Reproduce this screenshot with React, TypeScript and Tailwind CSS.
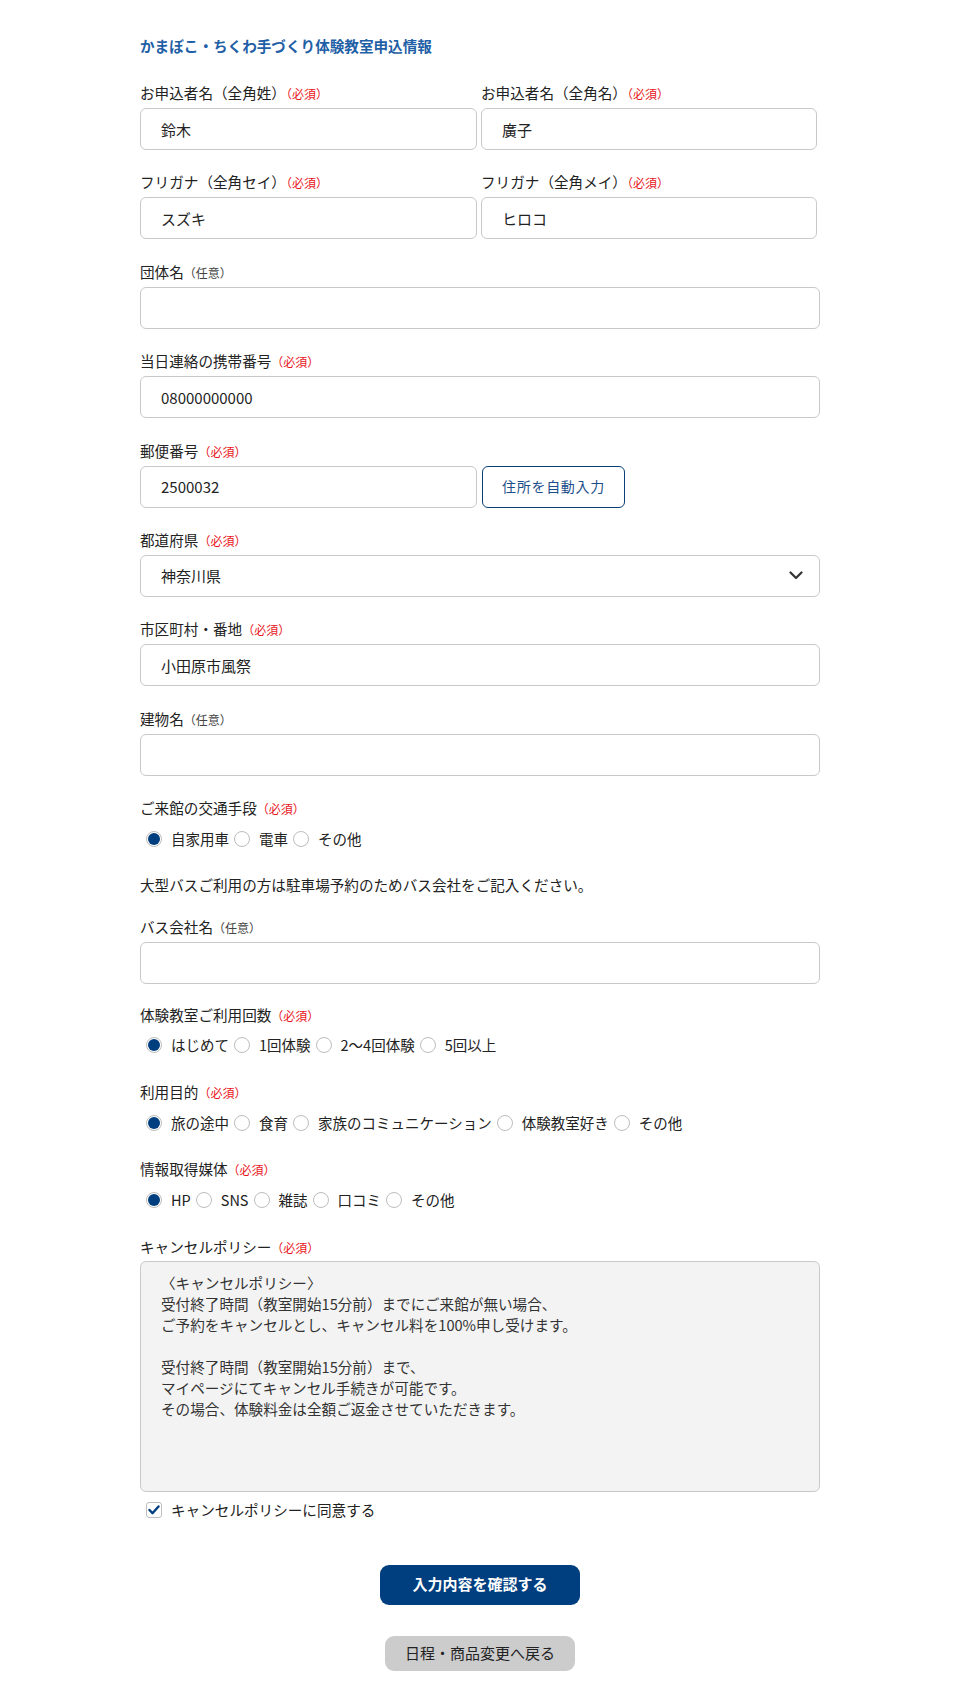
import React from "react";

const Required = () => <span className="text-[12px] leading-none text-[#e8161c]">（必須）</span>;
const Optional = () => <span className="text-[12px] leading-none text-[#444444]">（任意）</span>;

const Label = (props: { text: string; required?: boolean }) => {
  return (
    <div className="text-[14.6px] leading-[22px] text-[#222222]">
      {props.text}
      {props.required ? <Required /> : <Optional />}
    </div>
  );
};

const TextBox = (props: { value?: string }) => {
  return (
    <input
      readOnly
      defaultValue={props.value ?? ""}
      className="mt-[4px] block h-[42px] w-full rounded-[6px] border border-[#c9c9c9] bg-white px-[20px] text-[15px] text-[#222222] outline-none"
    />
  );
};

const Field = (props: { label: string; required?: boolean; value?: string; className?: string }) => {
  return (
    <div className={props.className ?? "mb-[21.4px]"}>
      <Label text={props.label} required={props.required} />
      <TextBox value={props.value} />
    </div>
  );
};

const RadioDot = (props: { checked?: boolean }) => {
  return (
    <span className="flex h-[16px] w-[16px] shrink-0 items-center justify-center rounded-full border border-[#bdbdbd] bg-white">
      {props.checked && <span className="h-[12px] w-[12px] rounded-full bg-[#003f7f]" />}
    </span>
  );
};

const RadioGroup = (props: { label: string; options: string[] }) => {
  return (
    <div className="mb-[21.8px]">
      <Label text={props.label} required />
      <div className="mt-[5.5px] flex h-[28px] items-center text-[14.5px] text-[#222222]">
        {props.options.map((option, i) => (
          <label key={option} className={i === 0 ? "ml-[6px] flex items-center" : "ml-[5px] flex items-center"}>
            <RadioDot checked={i === 0} />
            <span className="ml-[9px]">{option}</span>
          </label>
        ))}
      </div>
    </div>
  );
};

const policyText = `〈キャンセルポリシー〉
受付終了時間（教室開始15分前）までにご来館が無い場合、
ご予約をキャンセルとし、キャンセル料を100%申し受けます。

受付終了時間（教室開始15分前）まで、
マイページにてキャンセル手続きが可能です。
その場合、体験料金は全額ご返金させていただきます。`;

export default function App() {
  return (
    <div className="min-h-screen bg-white font-['Noto_Sans_CJK_JP',sans-serif]">
      <form className="mx-auto w-[680px] pt-[35px] pb-[35px]">
        <h2 className="mb-[25px] text-[14.6px] font-bold leading-[22px] text-[#1f5fa6]">
          かまぼこ・ちくわ手づくり体験教室申込情報
        </h2>

        <div className="grid grid-cols-[337px_336px] gap-x-[4px]">
          <Field label="お申込者名（全角姓）" required value="鈴木" />
          <Field label="お申込者名（全角名）" required value="廣子" />
          <Field label="フリガナ（全角セイ）" required value="スズキ" />
          <Field label="フリガナ（全角メイ）" required value="ヒロコ" />
        </div>

        <Field label="団体名" />
        <Field label="当日連絡の携帯番号" required value="08000000000" />

        <div className="mb-[21.4px]">
          <Label text="郵便番号" required />
          <div className="mt-[4px] flex">
            <input
              readOnly
              defaultValue="2500032"
              className="block h-[42px] w-[337px] rounded-[6px] border border-[#c9c9c9] px-[20px] text-[15px] text-[#222222] outline-none"
            />
            <button
              type="button"
              className="ml-[5px] h-[42px] w-[143px] rounded-[6px] border-[1.5px] border-[#0b3f78] bg-white text-[14px] tracking-[0.05em] text-[#1c4f8a]"
            >
              住所を自動入力
            </button>
          </div>
        </div>

        <div className="mb-[21.4px]">
          <Label text="都道府県" required />
          <div className="mt-[4px] flex h-[42px] items-center justify-between rounded-[6px] border border-[#c9c9c9] pl-[20px] pr-[16px] text-[15px] text-[#222222]">
            <span>神奈川県</span>
            <svg width="14" height="9" viewBox="0 0 14 9" fill="none">
              <polyline points="1.5,1.5 7,7 12.5,1.5" stroke="#333333" strokeWidth="2.2" strokeLinecap="round" strokeLinejoin="round" />
            </svg>
          </div>
        </div>

        <Field label="市区町村・番地" required value="小田原市風祭" />
        <Field label="建物名" />

        <RadioGroup label="ご来館の交通手段" options={["自家用車", "電車", "その他"]} />

        <p className="mb-[20px] text-[14.6px] leading-[22px] text-[#222222]">
          大型バスご利用の方は駐車場予約のためバス会社をご記入ください。
        </p>

        <Field label="バス会社名" className="mb-[19.4px]" />

        <RadioGroup label="体験教室ご利用回数" options={["はじめて", "1回体験", "2〜4回体験", "5回以上"]} />
        <RadioGroup label="利用目的" options={["旅の途中", "食育", "家族のコミュニケーション", "体験教室好き", "その他"]} />
        <RadioGroup label="情報取得媒体" options={["HP", "SNS", "雑誌", "口コミ", "その他"]} />

        <div>
          <Label text="キャンセルポリシー" required />
          <textarea
            readOnly
            defaultValue={policyText}
            className="mt-[3px] block h-[231px] w-full resize-none rounded-[6px] border border-[#c9c9c9] bg-[#f3f3f3] px-[20px] pt-[10px] text-[14.6px] leading-[21px] text-[#333333] outline-none"
          />
          <label className="mt-[6px] flex h-[24px] items-center text-[14.6px] text-[#222222]">
            <span className="ml-[6px] flex h-[16px] w-[16px] items-center justify-center rounded-[3px] border border-[#bdbdbd] bg-white">
              <svg width="12" height="10" viewBox="0 0 12 10" fill="none">
                <polyline points="1.5,5 4.5,8.2 10.5,1.5" stroke="#003f7f" strokeWidth="2.4" strokeLinecap="round" strokeLinejoin="round" />
              </svg>
            </span>
            <span className="ml-[9px]">キャンセルポリシーに同意する</span>
          </label>
        </div>

        <div className="mt-[43px] flex flex-col items-center">
          <button
            type="button"
            className="h-[40px] w-[200px] rounded-[9px] bg-[#003f7f] text-[15px] font-bold text-white"
          >
            入力内容を確認する
          </button>
          <button
            type="button"
            className="mt-[31px] h-[35px] w-[190px] rounded-[9px] bg-[#cccccc] text-[15px] text-[#222222]"
          >
            日程・商品変更へ戻る
          </button>
        </div>
      </form>
    </div>
  );
}
